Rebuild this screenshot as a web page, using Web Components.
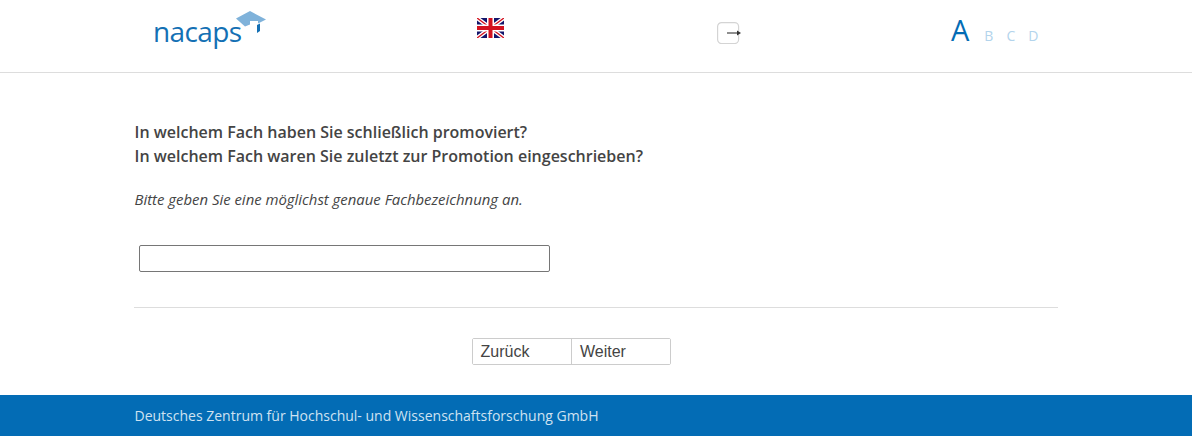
<!DOCTYPE html>
<html lang="de">
<head>
<meta charset="utf-8">
<title>nacaps</title>
<style>
html, body { margin: 0; padding: 0; background: #fff; }
body { font-family: "Open Sans", sans-serif; color: #444; overflow: hidden; }
</style>
</head>
<body>
<survey-header></survey-header>
<survey-question>
  <span slot="title">In welchem Fach haben Sie schließlich promoviert?<br>In welchem Fach waren Sie zuletzt zur Promotion eingeschrieben?</span>
  <span slot="hint">Bitte geben Sie eine möglichst genaue Fachbezeichnung an.</span>
</survey-question>
<survey-nav></survey-nav>
<survey-footer>Deutsches Zentrum für Hochschul- und Wissenschaftsforschung GmbH</survey-footer>

<script>
class SurveyHeader extends HTMLElement {
    constructor() {
        super();
        this.attachShadow({ mode: 'open' });
        this.shadowRoot.innerHTML = `
          <style>
            :host {
              display: grid;
              grid-template-columns: 477px 240px 234px 1fr;
              height: 72px;
              border-bottom: 1px solid #ddd;
            }
            .logo {
              display: flex;
              align-items: flex-start;
              padding: 10px 0 0 153px;
            }
            .logo span {
              font: 500 28px/1 "Open Sans", sans-serif;
              letter-spacing: -0.6px;
              color: #1470b4;
              margin-top: 7px;
            }
            .logo svg { margin-left: -8px; flex: none; }
            .flag { padding-top: 18px; }
            .exit { padding-top: 22px; }
            svg { display: block; }
            .sizes {
              display: flex;
              align-items: baseline;
              gap: 13px;
              height: 40px;
              padding-top: 10px;
              font-family: "Open Sans", sans-serif;
              font-size: 14px;
              color: #b3d4ec;
            }
            .sizes b {
              font-weight: 500;
              font-size: 29px;
              line-height: 40px;
              color: #036cb5;
              margin-right: 2px;
            }
          </style>
          <div class="logo">
            <span>nacaps</span>
            <svg width="34" height="26" viewBox="0 0 34 26">
              <path d="M16 1 L32 9.5 L24 13.5 L24 11 L16 11 L16 14.5 L11 16.5 L2 8.5 Z" fill="#7fb2da"/>
              <path d="M23 15 L26 13.5 L26 21 L23 23 Z" fill="#1470b4"/>
            </svg>
          </div>
          <div class="flag">
            <svg width="27" height="20" viewBox="0 0 27 20">
              <rect width="27" height="20" fill="#13156b"/>
              <path d="M0 0 L27 20 M27 0 L0 20" stroke="#fff" stroke-width="4"/>
              <path d="M0 0 L27 20 M27 0 L0 20" stroke="#d3121f" stroke-width="1.4"/>
              <path d="M13.5 0 V20 M0 10 H27" stroke="#fff" stroke-width="7"/>
              <path d="M13.5 0 V20 M0 10 H27" stroke="#d3121f" stroke-width="4"/>
            </svg>
          </div>
          <div class="exit">
            <svg width="24" height="22" viewBox="0 0 24 22">
              <rect x="0.6" y="0.6" width="21" height="21" rx="4" fill="#fff" stroke="#d4d4d4" stroke-width="1.2"/>
              <path d="M10 11 H21" stroke="#444" stroke-width="1.2"/>
              <path d="M20 8.6 L24 11 L20 13.4 Z" fill="#333"/>
            </svg>
          </div>
          <div class="sizes"><b>A</b><span>B</span><span>C</span><span>D</span></div>
        `;
    }
}
customElements.define('survey-header', SurveyHeader);

class SurveyQuestion extends HTMLElement {
    constructor() {
        super();
        this.attachShadow({ mode: 'open' });
        this.shadowRoot.innerHTML = `
          <style>
            :host {
              display: block;
              margin: 0 134px;
              padding: 47px 0 35px;
              border-bottom: 1px solid #ddd;
              color: #444;
            }
            .title {
              font: 600 16px/24px "Open Sans", sans-serif;
              padding-left: 0.5px;
            }
            .hint {
              font: italic 400 14.9px/20px "Open Sans", sans-serif;
              margin-top: 21px;
              padding-left: 0.5px;
            }
            input {
              display: block;
              box-sizing: border-box;
              width: 411px;
              height: 27px;
              margin: 36px 0 0 5px;
              padding: 0 4px;
              border: 1px solid #767676;
              border-radius: 2px;
              background: #fff;
              outline: none;
            }
          </style>
          <div class="title"><slot name="title"></slot></div>
          <div class="hint"><slot name="hint"></slot></div>
          <input type="text">
        `;
    }
}
customElements.define('survey-question', SurveyQuestion);

class SurveyNav extends HTMLElement {
    constructor() {
        super();
        this.attachShadow({ mode: 'open' });
        this.shadowRoot.innerHTML = `
          <style>
            :host {
              display: flex;
              padding: 30px 0 30px 472px;
            }
            .group {
              display: flex;
              height: 27px;
              box-sizing: border-box;
              border: 1px solid #ccc;
              border-radius: 2px;
            }
            button {
              width: 98px;
              padding: 0 0 0 7.5px;
              border: 0;
              background: #fff;
              text-align: left;
              font: 16px "Liberation Sans", Arial, sans-serif;
              color: #444;
            }
            button + button { border-left: 1px solid #ccc; width: 99px; padding-left: 8px; }
          </style>
          <div class="group">
            <button type="button">Zurück</button>
            <button type="button">Weiter</button>
          </div>
        `;
    }
}
customElements.define('survey-nav', SurveyNav);

class SurveyFooter extends HTMLElement {
    constructor() {
        super();
        this.attachShadow({ mode: 'open' });
        this.shadowRoot.innerHTML = `
          <style>
            :host {
              display: block;
              height: 41px;
              padding: 0 134.5px;
              background: #036cb5;
              color: #cfe2f1;
              font: 14px/41px "Open Sans", sans-serif;
            }
          </style>
          <slot></slot>
        `;
    }
}
customElements.define('survey-footer', SurveyFooter);
</script>
</body>
</html>
